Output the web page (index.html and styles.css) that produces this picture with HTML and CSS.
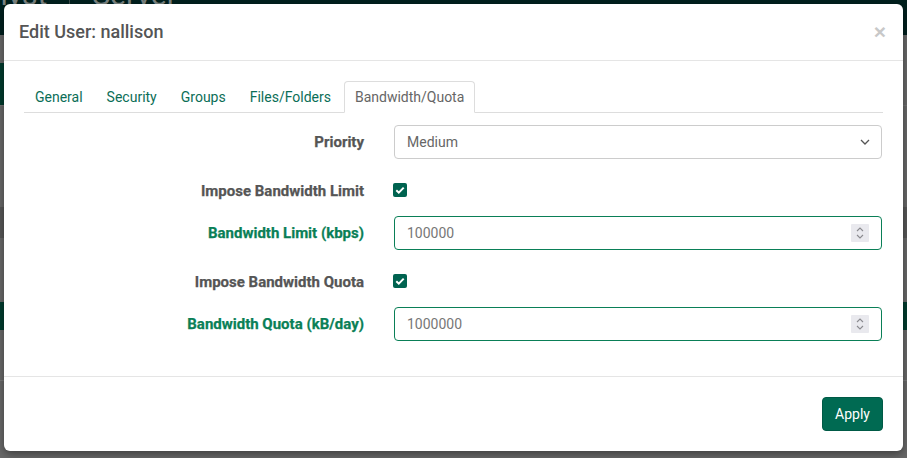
FILE: index.html
```html
<!DOCTYPE html>
<html lang="en">
<head>
<meta charset="utf-8">
<title>Edit User</title>
<link rel="stylesheet" href="styles.css">
</head>
<body>
<div class="page">
  <div class="navbar"><span class="brand b1">Analyst</span><span class="brand-sep"></span><span class="brand">Server</span></div>
  <div class="bg-gap g1"></div>
  <div class="bg-side"><span class="side-mark"></span></div>
  <div class="bg-gap g2"></div>
  <div class="bg-dark"></div>
  <div class="bg-gap g3"></div>
  <div class="bg-green"></div>
  <div class="bg-gap g4"></div>
  <div class="bg-rest"></div>
</div>

<div class="modal">
  <div class="modal-header">
    <h4 class="modal-title">Edit User: nallison</h4>
    <span class="close">&times;</span>
  </div>
  <div class="modal-body">
    <ul class="nav-tabs">
      <li><a>General</a></li>
      <li><a>Security</a></li>
      <li><a>Groups</a></li>
      <li><a>Files/Folders</a></li>
      <li class="active"><a>Bandwidth/Quota</a></li>
    </ul>
    <div class="tab-content">
      <div class="form-row">
        <label class="lbl">Priority</label>
        <div class="ctl select-box"><span>Medium</span>
          <svg class="chev" width="10" height="6" viewBox="0 0 10 6"><path d="M1 1l4 4 4-4" fill="none" stroke="#555" stroke-width="1.3"/></svg>
        </div>
      </div>
      <div class="form-row check-row">
        <label class="lbl">Impose Bandwidth Limit</label>
        <div class="check-cell"><span class="checkbox"><svg width="14" height="14" viewBox="0 0 14 14"><path d="M3.3 7.2l2.5 2.4 4.9-5" fill="none" stroke="#fff" stroke-width="2"/></svg></span></div>
      </div>
      <div class="form-row">
        <label class="lbl green">Bandwidth Limit (kbps)</label>
        <div class="ctl num-box"><span>100000</span>
          <span class="spin"><svg width="18" height="18" viewBox="0 0 18 18"><path d="M6 7l3-3 3 3M6 11l3 3 3-3" fill="none" stroke="#8a8a8f" stroke-width="1.1"/></svg></span>
        </div>
      </div>
      <div class="form-row check-row">
        <label class="lbl">Impose Bandwidth Quota</label>
        <div class="check-cell"><span class="checkbox"><svg width="14" height="14" viewBox="0 0 14 14"><path d="M3.3 7.2l2.5 2.4 4.9-5" fill="none" stroke="#fff" stroke-width="2"/></svg></span></div>
      </div>
      <div class="form-row">
        <label class="lbl green">Bandwidth Quota (kB/day)</label>
        <div class="ctl num-box"><span>1000000</span>
          <span class="spin"><svg width="18" height="18" viewBox="0 0 18 18"><path d="M6 7l3-3 3 3M6 11l3 3 3-3" fill="none" stroke="#8a8a8f" stroke-width="1.1"/></svg></span>
        </div>
      </div>
    </div>
  </div>
  <div class="modal-footer">
    <button class="btn-apply">Apply</button>
  </div>
</div>
</body>
</html>
```

FILE: styles.css
```css
html, body {
  margin: 0;
  padding: 0;
  width: 907px;
  height: 458px;
  overflow: hidden;
  font-family: Roboto, "Liberation Sans", Arial, sans-serif;
  font-size: 14px;
  color: #555;
  background: #686868;
}

.page {
  display: flex;
  flex-direction: column;
  height: 458px;
}
.navbar {
  height: 35px;
  background: #00201e;
  display: flex;
  align-items: flex-start;
  overflow: hidden;
}
.brand {
  font-size: 30px;
  color: #7c8482;
  margin-top: -22px;
  line-height: 34px;
}
.brand.b1 { margin-left: -52px; }
.brand-sep {
  width: 1px;
  height: 20px;
  background: #3d4d4b;
  margin: 0 22px 0 22px;
}
.bg-gap { background: #686868; }
.g1 { height: 28px; }
.bg-side { height: 42px; display: flex; background: #686868; border-bottom: 1px solid #747474; }
.side-mark { width: 10px; background: #003a2d; }
.g2 { height: 101px; border-top: 19px solid #686868; box-sizing: border-box; }
.bg-dark { height: 31px; background: #575757; }
.g3 { height: 64px; }
.bg-green { height: 28px; background: #003c2e; }
.g4 { height: 50px; }
.bg-rest { flex: 1; border-top: 1px solid #7a7a7a; }

/* modal */
.modal {
  position: absolute;
  left: 4px;
  top: 4px;
  width: 899px;
  background: #fff;
  border-radius: 6px;
  box-shadow: 0 3px 9px rgba(0,0,0,.4);
}
.modal-header {
  display: flex;
  justify-content: space-between;
  align-items: flex-start;
  padding: 15px;
  border-bottom: 1px solid #e5e5e5;
}
.modal-title {
  margin: 0;
  font-size: 18px;
  font-weight: 500;
  line-height: 26px;
  color: #555;
}
.close {
  font-size: 21px;
  font-weight: 700;
  line-height: 21px;
  color: #c8c8c8;
  margin-top: 2px;
  margin-right: 2px;
  font-family: "Liberation Sans", Arial, sans-serif;
}

.modal-body {
  padding: 20px 20px 20px 20px;
}
.nav-tabs {
  list-style: none;
  margin: 0;
  padding: 0;
  display: flex;
  border-bottom: 1px solid #ddd;
}
.nav-tabs li {
  margin-right: 2px;
  margin-bottom: -1px;
}
.nav-tabs a {
  display: block;
  padding: 5px 10px;
  line-height: 20px;
  border: 1px solid transparent;
  border-radius: 4px 4px 0 0;
  color: #0b6e57;
}
.nav-tabs .active a {
  border-color: #ddd;
  border-bottom-color: #fff;
  background: #fff;
  color: #666;
}

.tab-content {
  padding-top: 12px;
}
.form-row {
  display: grid;
  grid-template-columns: 340px 488px;
  column-gap: 30px;
  margin-bottom: 15px;
}
.lbl {
  text-align: right;
  font-weight: 700;
  font-size: 15px;
  padding-top: 7px;
  line-height: 20px;
  color: #555;
  -webkit-text-stroke: 0.25px currentColor;
}
.lbl.green { color: #0a7f57; }
.check-row { height: 27px; }
.check-cell { padding-top: 9px; }
.checkbox {
  display: block;
  width: 14px;
  height: 14px;
  margin-left: -1px;
  background: #006350;
  border-radius: 2px;
}
.checkbox svg { display: block; }

.ctl {
  box-sizing: border-box;
  height: 34px;
  border-radius: 4px;
  display: flex;
  align-items: center;
  justify-content: space-between;
  padding: 0 12px;
  color: #777;
  font-size: 14px;
}
.select-box {
  border: 1px solid #ccc;
  color: #666;
}
.chev { margin-right: -1px; }
.num-box {
  border: 1px solid #0a7f57;
}
.spin {
  display: block;
  width: 18px;
  height: 18px;
  background: #e9e9ee;
  border-radius: 1px;
}
.spin svg { display: block; }

.modal-footer {
  border-top: 1px solid #e5e5e5;
  padding: 20px;
  display: flex;
  justify-content: flex-end;
}
.btn-apply {
  font-family: Roboto, "Liberation Sans", Arial, sans-serif;
  font-size: 14px;
  line-height: 20px;
  padding: 6px 12px;
  height: 34px;
  color: #fff;
  background: #006a52;
  border: 1px solid #005a46;
  border-radius: 4px;
}
```
